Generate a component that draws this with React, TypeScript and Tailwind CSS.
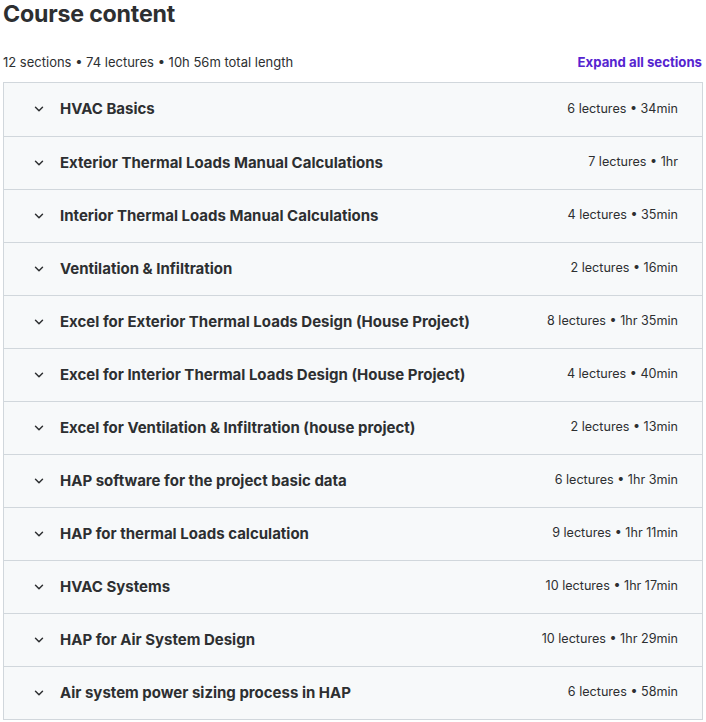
import { ChevronDown } from "lucide-react";

const sections = [
  { title: "HVAC Basics", meta: "6 lectures • 34min" },
  { title: "Exterior Thermal Loads Manual Calculations", meta: "7 lectures • 1hr" },
  { title: "Interior Thermal Loads Manual Calculations", meta: "4 lectures • 35min" },
  { title: "Ventilation & Infiltration", meta: "2 lectures • 16min" },
  { title: "Excel for Exterior Thermal Loads Design (House Project)", meta: "8 lectures • 1hr 35min" },
  { title: "Excel for Interior Thermal Loads Design (House Project)", meta: "4 lectures • 40min" },
  { title: "Excel for Ventilation & Infiltration (house project)", meta: "2 lectures • 13min" },
  { title: "HAP software for the project basic data", meta: "6 lectures • 1hr 3min" },
  { title: "HAP for thermal Loads calculation", meta: "9 lectures • 1hr 11min" },
  { title: "HVAC Systems", meta: "10 lectures • 1hr 17min" },
  { title: "HAP for Air System Design", meta: "10 lectures • 1hr 29min" },
  { title: "Air system power sizing process in HAP", meta: "6 lectures • 58min" },
];

export default function App() {
  return (
    <div className="w-[700px] ml-[3px] text-[#2d2f31] font-['Inter',sans-serif]">
      <h2 className="text-[23.2px] font-bold leading-[28px] tracking-[-0.2px]">Course content</h2>
      <div className="flex items-center justify-between mt-[25px] mb-[9px]">
        <span className="text-[13px] text-[#2d2f31]">12 sections • 74 lectures • 10h 56m total length</span>
        <button className="text-[13.2px] font-bold text-[#5624d0] mr-[1px]">Expand all sections</button>
      </div>
      <div className="border border-[#d1d7dc]">
        {sections.map((s, i) => (
          <div
            key={i}
            className={
              "flex items-center h-[53px] bg-[#f7f9fa] pl-[28px] pr-[24px] " +
              (i > 0 ? "border-t border-[#d1d7dc]" : "")
            }
          >
            <ChevronDown className="w-[14px] h-[14px] text-[#2d2f31]" strokeWidth={2.5} />
            <span className="ml-[14px] flex-1 text-[15px] font-bold">{s.title}</span>
            <span className="text-[12.6px]">{s.meta}</span>
          </div>
        ))}
      </div>
    </div>
  );
}
